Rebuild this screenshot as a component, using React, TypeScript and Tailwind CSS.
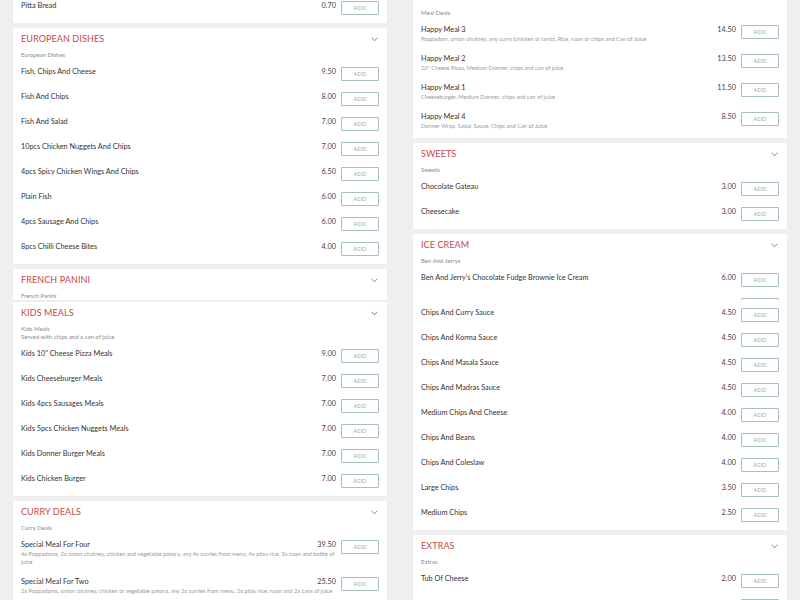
import React from "react";

type Row = { name: string; price: string; desc?: string };
type CardProps = {
  title?: string;
  subtitles?: string[];
  rows: Row[];
  topPad?: "none" | "title" | "rows";
};

function Chevron() {
  return (
    <svg width="7" height="5" viewBox="0 0 7 5" className="mr-[1px]">
      <polyline points="0.7,0.8 3.5,3.8 6.3,0.8" fill="none" stroke="#777" strokeWidth="0.9" />
    </svg>
  );
}

function ItemRow({ row }: { row: Row }) {
  return (
    <div className="flex items-start">
      <div className="min-w-0 flex-1">
        <div className="flex justify-between">
          <span className="text-[7.3px] leading-[10px] text-[#333]">{row.name}</span>
          <span className="text-[7.3px] leading-[10px] text-[#444]">{row.price}</span>
        </div>
        {row.desc && (
          <div className="text-[5.7px] leading-[8px] text-[#9a9a9a]">{row.desc}</div>
        )}
      </div>
      <div className="ml-[5px] flex h-[14px] w-[38px] shrink-0 items-center justify-center rounded-[1px] border border-[#a6c1b5] text-[5.8px] tracking-[0.2px] text-[#8db3a2]">
        ADD
      </div>
    </div>
  );
}

function Card({ title, subtitles, rows, topPad = "title" }: CardProps) {
  const pt = topPad === "none" ? "pt-[1px]" : topPad === "rows" ? "pt-[8px]" : "pt-[5px]";
  return (
    <div className={`bg-white px-[8px] pb-[8px] ${pt}`}>
      {title && (
        <div className="flex h-[12px] items-center justify-between">
          <span className="text-[9px] leading-[12px] tracking-[0.1px] text-[#c4474b]">{title}</span>
          <Chevron />
        </div>
      )}
      {subtitles && (
        <div className="mt-[6px]">
          {subtitles.map((s) => (
            <div key={s} className="text-[6px] leading-[8px] text-[#8a8a8a]">
              {s}
            </div>
          ))}
        </div>
      )}
      <div className={`flex flex-col gap-[11px] ${title ? "mt-[8px]" : ""}`}>
        {rows.map((r, i) => (
          <ItemRow key={i} row={r} />
        ))}
      </div>
    </div>
  );
}

function Tile({ children, offset }: { children: React.ReactNode; offset: string }) {
  return (
    <div className="h-[300px] w-[400px] overflow-hidden bg-[#efefef]">
      <div className={`flex flex-col gap-[5px] px-[13px] ${offset}`}>{children}</div>
    </div>
  );
}

export default function App() {
  return (
    <div
      className="grid h-[600px] w-[800px] grid-cols-2 bg-[#efefef]"
      style={{ fontFamily: "Lato, 'Liberation Sans', sans-serif" }}
    >
      <Tile offset="mt-0">
        <Card topPad="none" rows={[{ name: "Pitta Bread", price: "0.70" }]} />
        <Card
          title="EUROPEAN DISHES"
          subtitles={["European Dishes"]}
          rows={[
            { name: "Fish, Chips And Cheese", price: "9.50" },
            { name: "Fish And Chips", price: "8.00" },
            { name: "Fish And Salad", price: "7.00" },
            { name: "10pcs Chicken Nuggets And Chips", price: "7.00" },
            { name: "4pcs Spicy Chicken Wings And Chips", price: "6.50" },
            { name: "Plain Fish", price: "6.00" },
            { name: "4pcs Sausage And Chips", price: "6.00" },
            { name: "8pcs Chilli Cheese Bites", price: "4.00" },
          ]}
        />
        <Card
          title="FRENCH PANINI"
          subtitles={["French Panini"]}
          rows={[{ name: "", price: "" }]}
        />
      </Tile>
      <Tile offset="mt-[-14px]">
        <Card
          title="MEAL DEALS"
          subtitles={["Meal Deals"]}
          rows={[
            {
              name: "Happy Meal 3",
              price: "14.50",
              desc: "Poppadom, onion chutney, any curry (chicken or lamb), Rice, naan or chips and Can of Juice",
            },
            {
              name: "Happy Meal 2",
              price: "13.50",
              desc: "10\" Cheese Pizza, Medium Donner, chips and can of juice",
            },
            {
              name: "Happy Meal 1",
              price: "11.50",
              desc: "Cheeseburger, Medium Donner, chips and can of juice",
            },
            {
              name: "Happy Meal 4",
              price: "8.50",
              desc: "Donner Wrap, Salad, Sauce, Chips and Can of Juice",
            },
          ]}
        />
        <Card
          title="SWEETS"
          subtitles={["Sweets"]}
          rows={[
            { name: "Chocolate Gateau", price: "3.00" },
            { name: "Cheesecake", price: "3.00" },
          ]}
        />
        <Card
          title="ICE CREAM"
          subtitles={["Ben And Jerrys"]}
          rows={[
            { name: "Ben And Jerry's Chocolate Fudge Brownie Ice Cream", price: "6.00" },
            { name: "", price: "" },
          ]}
        />
      </Tile>
      <Tile offset="mt-[2px]">
        <Card
          title="KIDS MEALS"
          subtitles={["Kids Meals", "Served with chips and a can of juice"]}
          rows={[
            { name: "Kids 10\" Cheese Pizza Meals", price: "9.00" },
            { name: "Kids Cheeseburger Meals", price: "7.00" },
            { name: "Kids 4pcs Sausages Meals", price: "7.00" },
            { name: "Kids 5pcs Chicken Nuggets Meals", price: "7.00" },
            { name: "Kids Donner Burger Meals", price: "7.00" },
            { name: "Kids Chicken Burger", price: "7.00" },
          ]}
        />
        <Card
          title="CURRY DEALS"
          subtitles={["Curry Deals"]}
          rows={[
            {
              name: "Special Meal For Four",
              price: "39.50",
              desc: "4x Poppadoms, 2x onion chutney, chicken and vegetable pakora, any 4x curries from menu, 4x pilau rice, 2x naan and bottle of juice",
            },
            {
              name: "Special Meal For Two",
              price: "25.50",
              desc: "2x Poppadoms, onion chutney, chicken or vegetable pakora, any 2x curries from menu, 2x pilau rice, naan and 2x cans of juice",
            },
          ]}
        />
      </Tile>
      <Tile offset="mt-0">
        <Card
          topPad="rows"
          rows={[
            { name: "Chips And Curry Sauce", price: "4.50" },
            { name: "Chips And Korma Sauce", price: "4.50" },
            { name: "Chips And Masala Sauce", price: "4.50" },
            { name: "Chips And Madras Sauce", price: "4.50" },
            { name: "Medium Chips And Cheese", price: "4.00" },
            { name: "Chips And Beans", price: "4.00" },
            { name: "Chips And Coleslaw", price: "4.00" },
            { name: "Large Chips", price: "3.50" },
            { name: "Medium Chips", price: "2.50" },
          ]}
        />
        <Card
          title="EXTRAS"
          subtitles={["Extras"]}
          rows={[
            { name: "Tub Of Cheese", price: "2.00" },
            { name: "", price: "" },
          ]}
        />
      </Tile>
    </div>
  );
}
